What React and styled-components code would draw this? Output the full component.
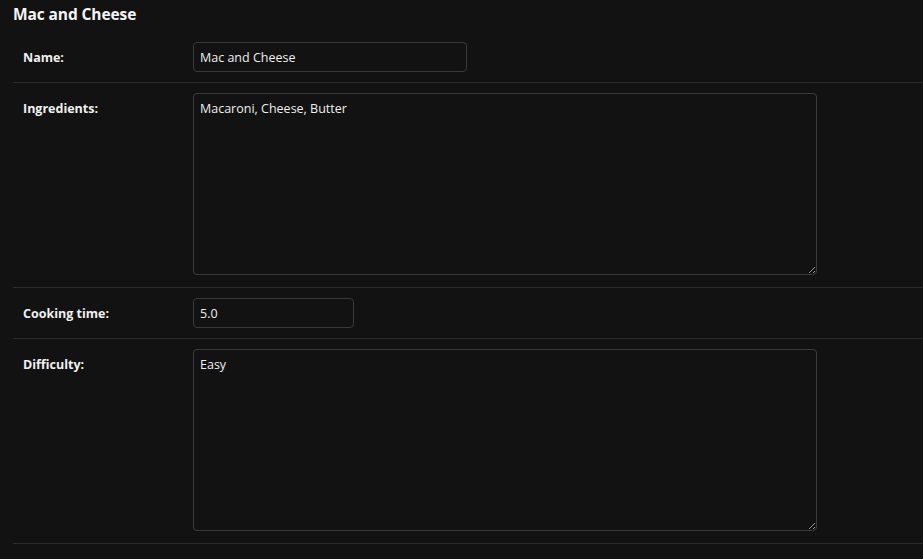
import React from 'react'
import styled, { createGlobalStyle } from 'styled-components';

const Global = createGlobalStyle`
  html, body {
    margin: 0;
    padding: 0;
    background: #121212;
    color-scheme: dark;
  }
  body {
    font-family: "Open Sans", "Noto Sans", sans-serif;
    color: #eeeeee;
  }
`;

const Page = styled.div`
  padding: 0 0 0 13px;
`;

const Title = styled.h2`
  margin: 0;
  height: 32px;
  box-sizing: border-box;
  padding-top: 4px;
  font-size: 15.5px;
  line-height: 21px;
  font-weight: 700;
  color: #f5f5f5;
  letter-spacing: -0.1px;
`;

const Row = styled.div`
  display: flex;
  align-items: flex-start;
  padding: 10px;
  border-bottom: 1px solid #2a2a2a;
`;

const Label = styled.label`
  width: 170px;
  flex: none;
  font-size: 12.5px;
  font-weight: 700;
  color: #f0f0f0;
  padding-top: 7px;
`;

const Input = styled.input`
  box-sizing: border-box;
  width: ${p => p.$w}px;
  height: 30px;
  padding: 5px 6px;
  border: 1px solid #3a3a3a;
  border-radius: 4px;
  background: #121212;
  color: #eeeeee;
  font-family: inherit;
  font-size: 12.5px;
  outline: none;
`;

const Area = styled.textarea`
  box-sizing: border-box;
  display: block;
  width: 624px;
  height: 182px;
  margin-bottom: 2px;
  padding: 6px 6px;
  border: 1px solid #3a3a3a;
  border-radius: 4px;
  background: #121212;
  color: #eeeeee;
  font-family: inherit;
  font-size: 12.5px;
  outline: none;
  resize: both;
`;

function App() {
    return (
        <Page>
            <Global />
            <Title>Mac and Cheese</Title>
            <Row>
                <Label>Name:</Label>
                <Input $w={274} defaultValue='Mac and Cheese' />
            </Row>
            <Row>
                <Label>Ingredients:</Label>
                <Area defaultValue='Macaroni, Cheese, Butter' />
            </Row>
            <Row>
                <Label>Cooking time:</Label>
                <Input $w={161} defaultValue='5.0' />
            </Row>
            <Row>
                <Label>Difficulty:</Label>
                <Area defaultValue='Easy' />
            </Row>
        </Page>
    )
}

export default App
